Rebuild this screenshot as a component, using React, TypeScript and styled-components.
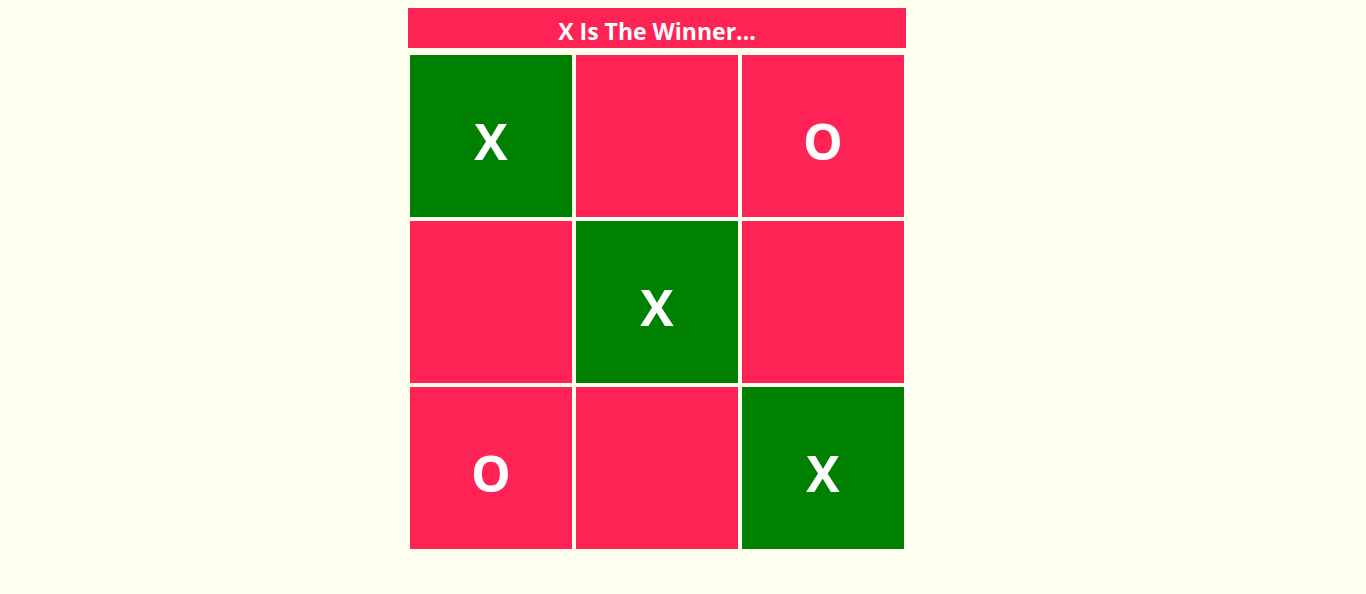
import React from 'react';
import styled, { createGlobalStyle } from 'styled-components';

const GlobalStyle = createGlobalStyle`
  html, body {
    background-color: #fffff0;
  }
  body {
    margin: 8px;
    font-family: "Segoe UI", "Open Sans", "Noto Sans", sans-serif;
  }
`;

const Game = styled.div`
  width: 498px;
  margin-left: 400px;
`;

const Status = styled.h2`
  margin: 0 0 5px;
  height: 40px;
  padding-top: 3px;
  box-sizing: border-box;
  line-height: 40px;
  background-color: #ff2255;
  color: white;
  font-size: 23px;
  font-weight: 700;
  text-align: center;
`;

const Board = styled.div`
  display: grid;
  grid-template-columns: repeat(3, 166px);
`;

interface CellProps {
  win?: boolean;
}

const Cell = styled.div<CellProps>`
  width: 162px;
  height: 162px;
  margin: 2px;
  display: flex;
  justify-content: center;
  align-items: center;
  padding-top: 10px;
  box-sizing: border-box;
  background-color: ${props => props.win ? '#008000' : '#ff2255'};
  color: white;
  font-size: 50px;
  font-weight: 700;
`;

const squares = ['X', '', 'O', '', 'X', '', 'O', '', 'X'];
const winLine = [0, 4, 8];

const App: React.FC = () => {
  return (
    <>
      <GlobalStyle />
      <Game>
        <Status>X Is The Winner...</Status>
        <Board>
          {squares.map((value, index) => (
            <Cell key={index} win={winLine.includes(index)}>
              {value}
            </Cell>
          ))}
        </Board>
      </Game>
    </>
  );
};

export default App;
